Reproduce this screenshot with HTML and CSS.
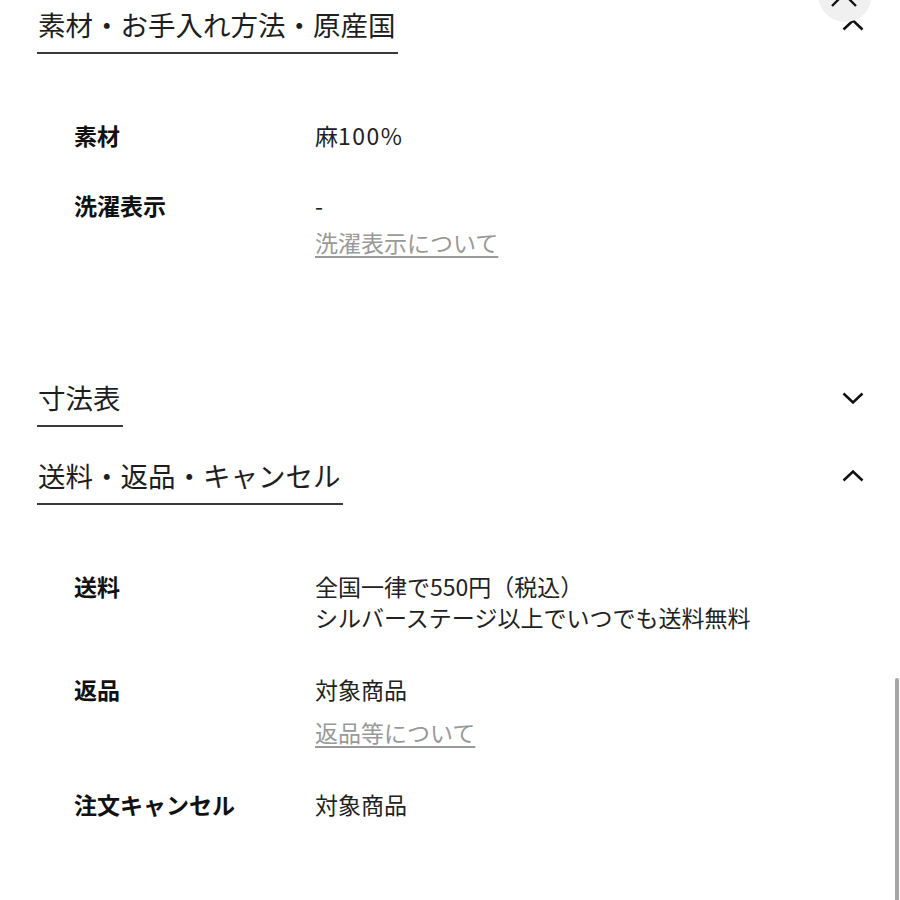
FILE: index.html
```html
<!DOCTYPE html>
<html lang="ja">
<head>
<meta charset="utf-8">
<link rel="stylesheet" href="styles.css">
</head>
<body>
<div class="page">
  <section class="acc">
    <div class="acc-head">
      <span class="acc-title">素材・お手入れ方法・原産国</span>
      <svg class="chev" width="22" height="12" viewBox="0 0 22 12"><path d="M1.5 10.5 L11 1.5 L20.5 10.5" fill="none" stroke="#111" stroke-width="2.5"/></svg>
    </div>
    <div class="acc-body">
      <div class="row">
        <div class="label">素材</div>
        <div class="value"><div>麻<span class="num">100%</span></div></div>
      </div>
      <div class="row">
        <div class="label">洗濯表示</div>
        <div class="value"><div>-</div><a class="link link-a" href="#">洗濯表示について</a></div>
      </div>
    </div>
  </section>

  <section class="acc">
    <div class="acc-head">
      <span class="acc-title">寸法表</span>
      <svg class="chev" width="22" height="12" viewBox="0 0 22 12"><path d="M1.5 1.5 L11 10.5 L20.5 1.5" fill="none" stroke="#111" stroke-width="2.5"/></svg>
    </div>
  </section>

  <section class="acc">
    <div class="acc-head">
      <span class="acc-title">送料・返品・キャンセル</span>
      <svg class="chev" width="22" height="12" viewBox="0 0 22 12"><path d="M1.5 10.5 L11 1.5 L20.5 10.5" fill="none" stroke="#111" stroke-width="2.5"/></svg>
    </div>
    <div class="acc-body acc-body-last">
      <div class="row">
        <div class="label">送料</div>
        <div class="value"><div>全国一律で550円（税込）</div><div>シルバーステージ以上でいつでも送料無料</div></div>
      </div>
      <div class="row">
        <div class="label">返品</div>
        <div class="value"><div>対象商品</div><a class="link link-b" href="#">返品等について</a></div>
      </div>
      <div class="row">
        <div class="label">注文キャンセル</div>
        <div class="value"><div>対象商品</div></div>
      </div>
    </div>
  </section>
</div>

<div class="float-btn">
  <svg width="28" height="16" viewBox="0 0 28 16"><path d="M2 14 L14 2 L26 14" fill="none" stroke="#111" stroke-width="2.4"/></svg>
</div>
<div class="scrollbar"></div>
</body>
</html>
```

FILE: styles.css
```css
html, body {
  margin: 0;
  padding: 0;
  background: #fff;
}
body {
  font-family: "Noto Sans CJK JP", "Noto Sans", sans-serif;
  color: #222;
  overflow: hidden;
}
.page {
  padding: 4px 37px 0 37px;
}
.acc + .acc {
  margin-top: 28px;
}
.acc-head {
  display: flex;
  justify-content: space-between;
  align-items: center;
}
.acc-title {
  display: inline-block;
  font-size: 27.5px;
  line-height: 40px;
  padding-bottom: 8px;
  padding-right: 2px;
  border-bottom: 2px solid #3a3a3a;
  color: #1e1e1e;
  padding-left: 1px;
}
.chev {
  display: block;
  margin-right: -1px;
  margin-bottom: 8px;
}
.acc-body {
  padding: 66px 0 91px 37px;
  display: flex;
  flex-direction: column;
  gap: 39px;
}
.acc-body-last {
  gap: 41px;
}
.row {
  display: flex;
  font-size: 23px;
  line-height: 31px;
}
.label {
  width: 241px;
  flex: none;
  font-weight: bold;
  color: #111;
}
.value {
  display: flex;
  flex-direction: column;
  align-items: flex-start;
  color: #222;
}
.num {
  letter-spacing: 1.5px;
}
.link {
  color: #999;
  text-decoration: underline;
  text-decoration-color: #999;
  text-underline-offset: 4px;
  text-decoration-thickness: 1.5px;
}
.link-a {
  margin-top: 6px;
}
.link-b {
  margin-top: 12px;
}
.float-btn {
  position: fixed;
  left: 818px;
  top: -32px;
  width: 54px;
  height: 54px;
  border-radius: 50%;
  background: #f0f0f0;
  display: flex;
  align-items: center;
  justify-content: center;
}
.float-btn svg {
  display: block;
  margin-top: 10px;
  margin-left: -2px;
}
.scrollbar {
  position: fixed;
  left: 895px;
  top: 678px;
  width: 4px;
  height: 240px;
  border-radius: 2px;
  background: #a6a6a6;
}
```
